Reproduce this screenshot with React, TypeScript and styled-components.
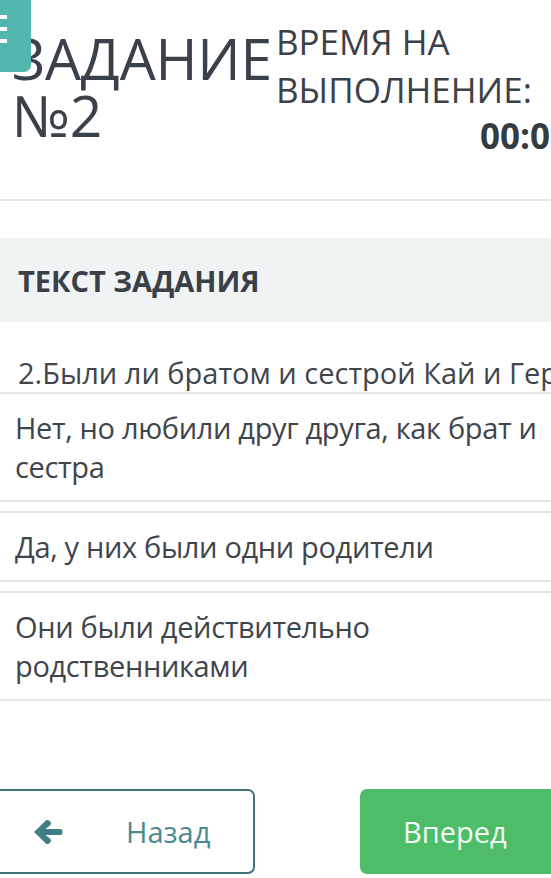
import React from "react";
import styled, { createGlobalStyle } from "styled-components";

const Global = createGlobalStyle`
  html, body { margin: 0; padding: 0; background: #ffffff; }
  body { font-family: "Open Sans", "Liberation Sans", sans-serif; color: #3b4148; overflow: hidden; }
  * { box-sizing: border-box; }
`;

const Page = styled.div`
  position: relative;
  width: 551px;
  height: 878px;
  overflow: hidden;
  background: #fff;
`;

const MenuButton = styled.div`
  position: absolute;
  left: 0;
  top: 0;
  width: 31px;
  height: 72px;
  background: #52b8ae;
  border-bottom-right-radius: 7px;
  display: flex;
  flex-direction: column;
  gap: 8px;
  padding-top: 15px;
  z-index: 2;
`;

const MenuBar = styled.span`
  display: block;
  width: 7px;
  height: 4px;
  background: #fff;
`;

const Header = styled.header`
  display: flex;
  align-items: flex-start;
  padding: 18px 0 41px 12px;
  border-bottom: 2px solid #e9eaeb;
  white-space: nowrap;
`;

const Title = styled.h1`
  margin: 12px 0 0;
  width: min-content;
  white-space: normal;
  font-size: 57px;
  line-height: 57px;
  font-weight: 400;
  color: #3a4149;
  letter-spacing: -0.2px;
  flex: none;
`;

const Timer = styled.div`
  flex: none;
  width: 294px;
  margin-left: 4px;
  display: flex;
  flex-direction: column;
`;

const TimerLabel = styled.div`
  font-size: 35px;
  line-height: 48px;
  font-weight: 400;
  color: #3a4149;
  white-space: normal;
  width: 270px;
`;

const TimerValue = styled.div`
  text-align: right;
  font-size: 35px;
  line-height: 44px;
  font-weight: 700;
  color: #353b42;
`;

const SectionBand = styled.div`
  margin-top: 37px;
  height: 84px;
  display: flex;
  align-items: center;
  padding-left: 18px;
  background: #f0f3f4;
  font-size: 29px;
  font-weight: 700;
  color: #3a4047;
`;

const Question = styled.div`
  height: 70px;
  padding: 31px 0 0 18px;
  font-size: 29px;
  line-height: 39px;
  white-space: nowrap;
  color: #41464d;
`;

const Options = styled.div`
  display: flex;
  flex-direction: column;
  gap: 9px;
`;

const Option = styled.div`
  border-top: 2px solid #e2e6e8;
  border-bottom: 2px solid #e2e6e8;
  padding: 14px 0 14px 15px;
  font-size: 29px;
  line-height: 39px;
  letter-spacing: -0.35px;
  color: #3f454c;
`;

const Footer = styled.div`
  margin-top: 88px;
  margin-left: -6px;
  display: flex;
  gap: 105px;
`;

const BackButton = styled.button`
  flex: none;
  width: 261px;
  height: 85px;
  border: 2px solid #3f767b;
  border-radius: 7px;
  background: #fff;
  display: flex;
  align-items: center;
  padding: 0 0 0 37px;
  gap: 63px;
  font-family: "Open Sans", "Liberation Sans", sans-serif;
  font-size: 29px;
  color: #4a898e;
`;

const NextButton = styled.button`
  flex: none;
  width: 220px;
  height: 85px;
  border: none;
  border-radius: 7px;
  background: #4dbd69;
  display: flex;
  align-items: center;
  padding: 0 0 0 43px;
  font-family: "Open Sans", "Liberation Sans", sans-serif;
  font-size: 29px;
  color: #f2fbf4;
`;

const ArrowLeft = () => (
  <svg width="30" height="26" viewBox="0 0 30 26" aria-hidden="true">
    <path
      d="M1 13 L12.5 1.8 Q14.5 0 16.3 1.8 L17.3 2.8 Q19 4.6 17.3 6.3 L12.5 10 H27 Q29.6 10 29.6 12.5 V13.5 Q29.6 16 27 16 H12.5 L17.3 19.7 Q19 21.4 17.3 23.2 L16.3 24.2 Q14.5 26 12.5 24.2 Z"
      fill="#3f7f84"
    />
  </svg>
);

const options = [
  "Нет, но любили друг друга, как брат и сестра",
  "Да, у них были одни родители",
  "Они были действительно родственниками",
];

export default function App() {
  return (
    <Page>
      <Global />
      <MenuButton>
        <MenuBar />
        <MenuBar />
        <MenuBar />
      </MenuButton>
      <Header>
        <Title>ЗАДАНИЕ №2</Title>
        <Timer>
          <TimerLabel>ВРЕМЯ НА ВЫПОЛНЕНИЕ:</TimerLabel>
          <TimerValue>00:00</TimerValue>
        </Timer>
      </Header>
      <SectionBand>ТЕКСТ ЗАДАНИЯ</SectionBand>
      <Question>2.Были ли братом и сестрой Кай и Герда?</Question>
      <Options>
        {options.map((o) => (
          <Option key={o}>{o}</Option>
        ))}
      </Options>
      <Footer>
        <BackButton>
          <ArrowLeft />
          Назад
        </BackButton>
        <NextButton>Вперед</NextButton>
      </Footer>
    </Page>
  );
}
